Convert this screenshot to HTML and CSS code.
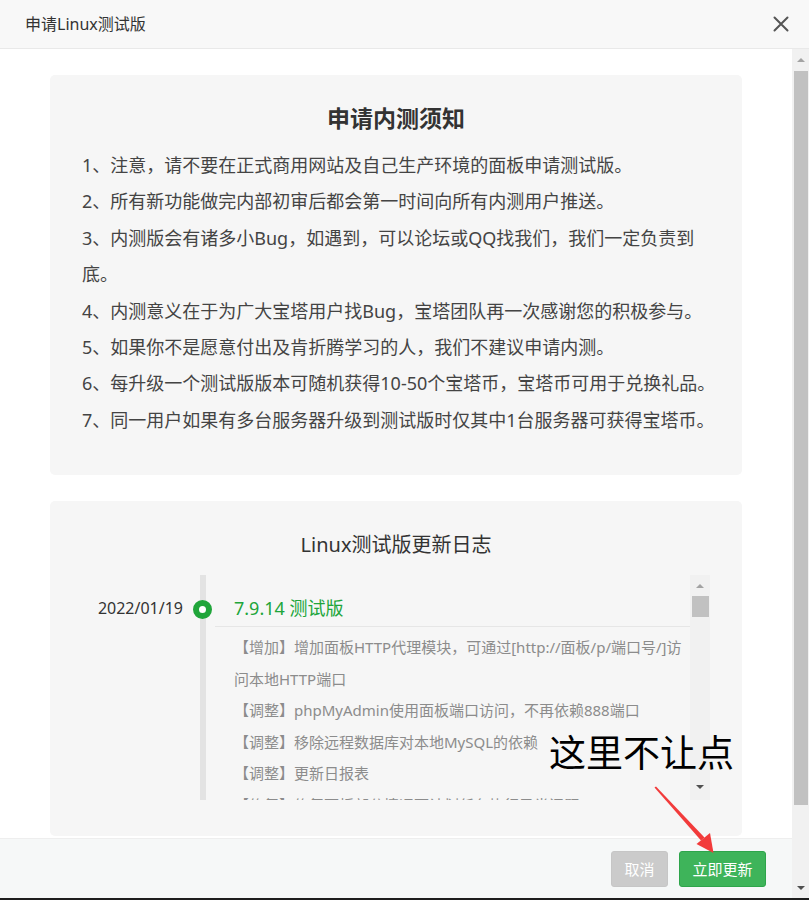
FILE: index.html
```html
<!DOCTYPE html>
<html lang="zh-CN">
<head>
<meta charset="utf-8">
<title>申请Linux测试版</title>
<link rel="stylesheet" href="styles.css">
</head>
<body>
<div class="page">
  <header class="hd">
    <span class="hd-title">申请Linux测试版</span>
    <svg class="close" width="16" height="16" viewBox="0 0 16 16"><path d="M1.5 1.5 L14.5 14.5 M14.5 1.5 L1.5 14.5" stroke="#555" stroke-width="2" stroke-linecap="round" fill="none"/></svg>
  </header>
  <div class="mid">
    <div class="main">
      <div class="scroll">
        <section class="card notice">
          <h2 class="notice-title">申请内测须知</h2>
          <div class="notes">
            <p class="nw">1、注意，请不要在正式商用网站及自己生产环境的面板申请测试版。</p>
            <p class="nw">2、所有新功能做完内部初审后都会第一时间向所有内测用户推送。</p>
            <p>3、内测版会有诸多小Bug，如遇到，可以论坛或QQ找我们，我们一定负责到底。</p>
            <p class="nw">4、内测意义在于为广大宝塔用户找Bug，宝塔团队再一次感谢您的积极参与。</p>
            <p class="nw">5、如果你不是愿意付出及肯折腾学习的人，我们不建议申请内测。</p>
            <p class="nw">6、每升级一个测试版版本可随机获得10-50个宝塔币，宝塔币可用于兑换礼品。</p>
            <p class="nw">7、同一用户如果有多台服务器升级到测试版时仅其中1台服务器可获得宝塔币。</p>
          </div>
        </section>
        <section class="card log">
          <h3 class="log-title">Linux测试版更新日志</h3>
          <div class="tl-frame">
            <div class="tl-view">
              <div class="tl-date">2022/01/19</div>
              <div class="tl-body">
                <span class="tl-dot"></span>
                <div class="tl-entry">
                  <div class="tl-ver">7.9.14 测试版</div>
                  <ul class="tl-items">
                    <li>【增加】增加面板HTTP代理模块，可通过[http://面板/p/端口号/]访问本地HTTP端口</li>
                    <li>【调整】phpMyAdmin使用面板端口访问，不再依赖888端口</li>
                    <li>【调整】移除远程数据库对本地MySQL的依赖</li>
                    <li>【调整】更新日报表</li>
                    <li>【修复】修复面板部分情况下计划任务执行异常问题</li>
                    <li>【修复】修复部分已知问题</li>
                  </ul>
                </div>
              </div>
            </div>
            <div class="vbar vbar-small">
              <div class="arr arr-top-s"><span class="tri-up"></span></div>
              <div class="thumb thumb-s"></div>
              <div class="spacer"></div>
              <div class="arr arr-bot-s"><span class="tri-down"></span></div>
            </div>
          </div>
        </section>
      </div>
      <footer class="ft">
        <button class="btn btn-gray">取消</button>
        <button class="btn btn-green">立即更新</button>
      </footer>
    </div>
    <div class="vbar vbar-page">
      <div class="arr arr-top-p"><span class="tri-up"></span></div>
      <div class="thumb thumb-p"></div>
      <div class="spacer"></div>
      <div class="arr arr-bot-p"><span class="tri-down"></span></div>
    </div>
  </div>
  <div class="bottom-line"></div>
  <div class="annot">这里不让点</div>
  <svg class="arrow" width="90" height="80" viewBox="640 780 90 80">
    <polygon points="654.5,787.5 656,786.5 704.5,837.5 701,840.5" fill="#f23b3b"/>
    <polygon points="713.5,853 696.5,844 710,833" fill="#f23b3b"/>
  </svg>
</div>
</body>
</html>
```

FILE: styles.css
```css
* { box-sizing: border-box; }
html, body {
  margin: 0;
  padding: 0;
  background: #fff;
  overflow: hidden;
}
body {
  font-family: "Noto Sans", "Noto Sans CJK SC", "Liberation Sans", sans-serif;
  color: #333;
}
.page {
  width: 809px;
  height: 900px;
  display: flex;
  flex-direction: column;
  position: relative;
}
.hd {
  height: 49px;
  flex-shrink: 0;
  background: #f8f8f8;
  border-bottom: 1px solid #e9e9e9;
  display: flex;
  align-items: center;
  justify-content: space-between;
  padding: 0 20px 0 25px;
}
.hd-title {
  font-size: 16px;
  line-height: 24px;
  color: #333;
}
.close { display: block; }
.mid {
  flex: 1;
  display: flex;
  min-height: 0;
}
.main {
  flex: 1;
  display: flex;
  flex-direction: column;
  min-width: 0;
}
.scroll {
  flex: 1;
  overflow: hidden;
  padding-top: 26px;
  background: #fff;
}
.card {
  margin: 0 50px;
  background: #f6f6f6;
  border-radius: 5px;
}
.notice {
  height: 400px;
  padding: 28px 32px 37px;
}
.notice-title {
  margin: 0;
  text-align: center;
  font-size: 23px;
  font-weight: bold;
  line-height: 30px;
  color: #333;
}
.notes {
  margin-top: 14px;
}
.notes p {
  margin: 0;
  font-size: 18px;
  line-height: 36.4px;
  color: #444;
}
.notes .nw { white-space: nowrap; }
.log {
  margin-top: 26px;
  height: 335px;
  padding: 30px 32px 36px;
}
.log-title {
  margin: 0;
  text-align: center;
  font-size: 20px;
  font-weight: normal;
  line-height: 28px;
  color: #333;
}
.tl-frame {
  margin-top: 16px;
  height: 225px;
  display: flex;
}
.tl-view {
  flex: 1;
  display: flex;
  overflow: hidden;
  min-width: 0;
}
.tl-date {
  width: 118px;
  flex-shrink: 0;
  text-align: right;
  padding: 18px 17px 0 0;
  font-size: 16px;
  line-height: 30px;
  color: #333;
  white-space: nowrap;
}
.tl-body {
  flex: 1;
  position: relative;
  border-left: 6px solid #e3e3e3;
}
.tl-dot {
  position: absolute;
  left: -13px;
  top: 25px;
  width: 19px;
  height: 19px;
  border-radius: 50%;
  background: #fff;
  border: 6px solid #20a53a;
}
.tl-entry {
  margin-left: 9px;
}
.tl-ver {
  padding: 18px 0 3px 19px;
  font-size: 18px;
  line-height: 30px;
  color: #20a53a;
  border-bottom: 1px solid #e6e6e6;
}
.tl-items {
  list-style: none;
  margin: 5px 0 0;
  padding: 0 0 0 19px;
}
.tl-items li {
  font-size: 15px;
  line-height: 31.6px;
  color: #8c8c8c;
}
.vbar {
  flex-shrink: 0;
  background: #f1f1f1;
  display: flex;
  flex-direction: column;
  align-items: center;
}
.vbar-small { width: 20px; }
.vbar-page { width: 17px; }
.arr {
  width: 100%;
  display: flex;
  align-items: center;
  justify-content: center;
  flex-shrink: 0;
}
.arr-top-s { height: 21px; }
.arr-bot-s { height: 26px; }
.arr-top-p { height: 22px; }
.arr-bot-p { height: 20px; }
.tri-up {
  width: 0;
  height: 0;
  border-left: 4px solid transparent;
  border-right: 4px solid transparent;
  border-bottom: 4px solid #a3a3a3;
}
.tri-down {
  width: 0;
  height: 0;
  border-left: 4px solid transparent;
  border-right: 4px solid transparent;
  border-top: 4px solid #505050;
}
.thumb { background: #c1c1c1; flex-shrink: 0; }
.thumb-s { width: 17px; height: 21px; }
.thumb-p { width: 14px; height: 734px; }
.spacer { flex: 1; }
.ft {
  height: 60px;
  flex-shrink: 0;
  background: #f6f8f8;
  border-top: 1px solid #eeeeee;
  display: flex;
  align-items: center;
  justify-content: flex-end;
  gap: 11px;
  padding-right: 26px;
}
.btn {
  height: 36px;
  border-radius: 3px;
  font-family: inherit;
  font-size: 15px;
  line-height: 20px;
  color: #fff;
  padding: 0;
  cursor: pointer;
}
.btn-gray {
  width: 57px;
  background: #cbcbcb;
  border: 1px solid #c6c6c6;
}
.btn-green {
  width: 87px;
  background: #3eb45a;
  border: 1px solid #2ea54b;
}
.bottom-line {
  height: 2px;
  flex-shrink: 0;
  background: #1e1e1e;
}
.annot {
  position: absolute;
  left: 549px;
  top: 734px;
  font-size: 37px;
  line-height: 37px;
  color: #000;
  white-space: nowrap;
}
.arrow {
  position: absolute;
  left: 640px;
  top: 780px;
}
```
